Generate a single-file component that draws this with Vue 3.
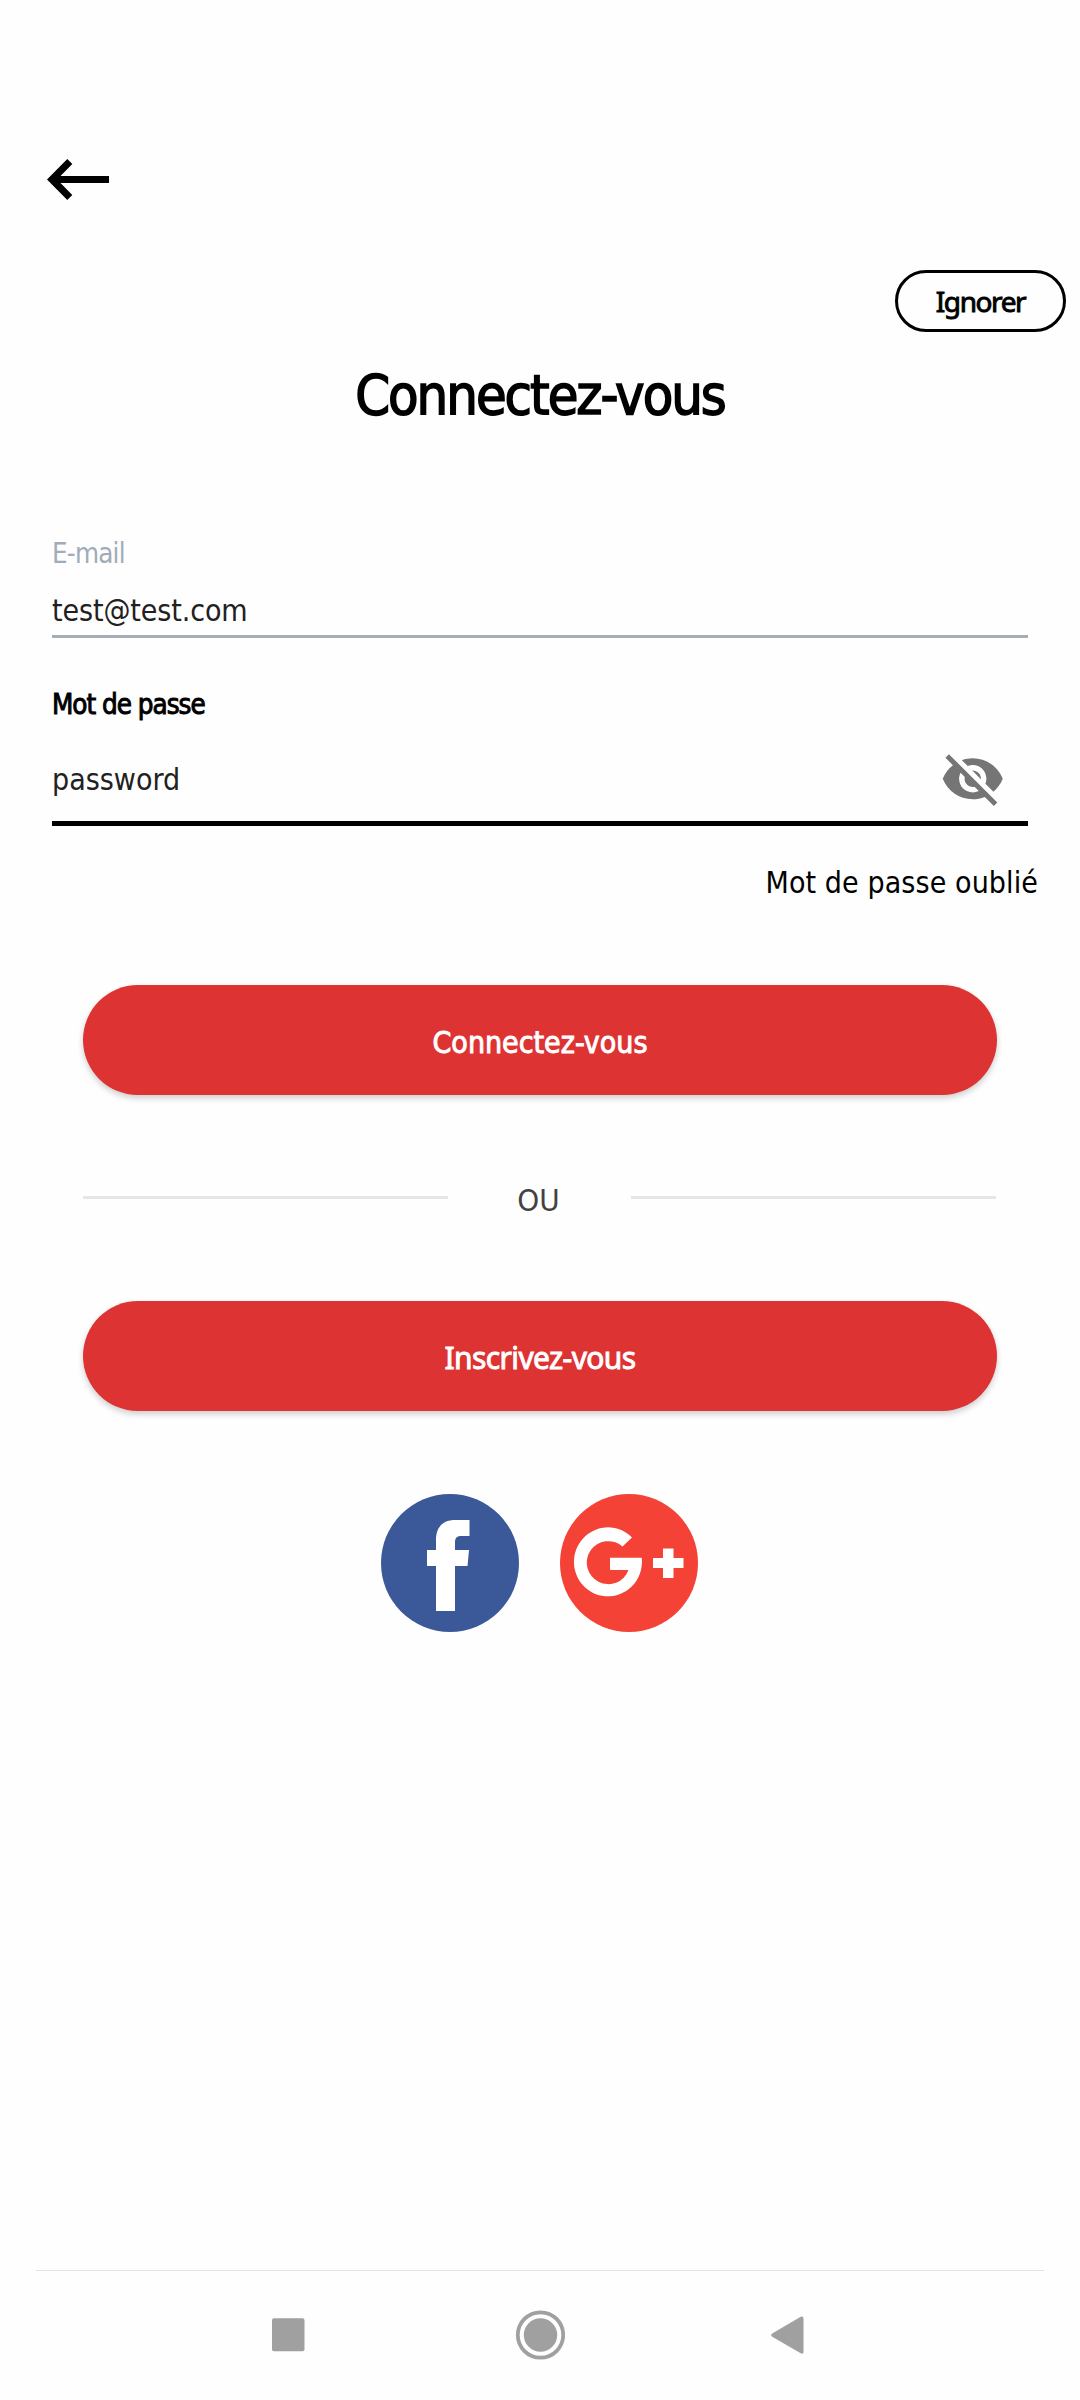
<script setup>
import { ref } from 'vue'

const email = ref('test@test.com')
const password = ref('password')
const isPasswordVisible = ref(true)

const togglePassword = () => {
  isPasswordVisible.value = !isPasswordVisible.value
}
</script>

<template>
  <div class="screen">
    <header class="header">
      <button class="icon-button" type="button" aria-label="Retour">
        <svg class="back-icon" viewBox="0 0 62 42">
          <path d="M62 17H13.500L25.300 5 20.300 0 0 20.500 20.300 41 25.300 36 13.500 24H62z" />
        </svg>
      </button>
    </header>

    <div class="skip-row">
      <button class="skip" type="button">Ignorer</button>
    </div>

    <h1 class="title">Connectez-vous</h1>

    <form class="form" @submit.prevent>
      <label class="field">
        <span class="label">E-mail</span>
        <input v-model="email" class="input" type="text" autocomplete="off" spellcheck="false" />
      </label>

      <div class="field field-active">
        <label class="label" for="password">Mot de passe</label>
        <div class="password-row">
          <input
            id="password"
            v-model="password"
            class="input"
            :type="isPasswordVisible ? 'text' : 'password'"
            autocomplete="off"
            spellcheck="false"
          />
          <button class="icon-button" type="button" aria-label="Afficher" @click="togglePassword">
            <svg class="eye-icon" viewBox="0 0 24 24">
              <path
                d="M12 7c2.76 0 5 2.24 5 5 0 .65-.13 1.26-.36 1.83l2.92 2.92c1.51-1.26 2.7-2.89 3.43-4.75-1.73-4.39-6-7.5-11-7.5-1.4 0-2.74.25-3.98.7l2.16 2.16C10.74 7.13 11.35 7 12 7zM2 4.27l2.28 2.28.46.46C3.08 8.3 1.78 10.02 1 12c1.73 4.39 6 7.5 11 7.5 1.55 0 3.03-.3 4.38-.84l.42.42L19.73 22 21 20.73 3.27 3 2 4.27zM7.53 9.8l1.55 1.55c-.05.21-.08.43-.08.65 0 1.66 1.34 3 3 3 .22 0 .44-.03.65-.08l1.55 1.55c-.67.33-1.41.53-2.2.53-2.76 0-5-2.24-5-5 0-.79.2-1.53.53-2.2zm4.31-.78l3.15 3.15.02-.16c0-1.66-1.34-3-3-3l-.17.01z"
              />
            </svg>
          </button>
        </div>
      </div>
    </form>

    <a class="forgot">Mot de passe oublié</a>

    <main class="actions">
      <button class="button" type="button">Connectez-vous</button>
      <div class="divider"><span class="divider-text">OU</span></div>
      <button class="button button-register" type="button">Inscrivez-vous</button>
    </main>

    <div class="social">
      <button class="icon-button" type="button" aria-label="Facebook">
        <svg class="social-icon" viewBox="0 0 138 138">
          <circle cx="69" cy="69" r="69" fill="#3b5998" />
          <path
            d="M55 117V72H46V56H55V46C55 33 62 26 74 26H88.500V42H80C76 42 74 44 74 48V56H88L86.500 72H74V117z"
            fill="#fff"
          />
        </svg>
      </button>
      <button class="icon-button" type="button" aria-label="Google+">
        <svg class="social-icon" viewBox="0 0 138 138">
          <circle cx="69" cy="69" r="69" fill="#f44336" />
          <path
            d="M72 43.500L62.500 52.500A21.500 21.500 0 1 0 68.500 76H50V63.800H81.700A34 34.500 0 1 1 72 43.500z"
            fill="#fff"
          />
          <path d="M103 54.500h10.500V64h10v10h-10v10H103V74H93V64h10z" fill="#fff" />
        </svg>
      </button>
    </div>

    <!-- Системная навигация -->
    <nav class="navbar">
      <svg class="nav-icon" viewBox="0 0 50 50">
        <rect x="9" y="8.300" width="32.500" height="33" rx="2" />
      </svg>
      <svg class="nav-icon" viewBox="0 0 50 50">
        <circle class="ring" cx="25.500" cy="25" r="22.700" />
        <circle cx="25.500" cy="25" r="16.700" />
      </svg>
      <svg class="nav-icon" viewBox="0 0 50 50">
        <path d="M5.200 23.500L33.300 7Q36.500 5.500 36.500 9V41.500Q36.500 45 33.300 43L5.200 26.700Q3 25 5.200 23.500z" />
      </svg>
    </nav>
  </div>
</template>

<style>
body {
  background: #fefefe;
}
</style>

<style scoped>
.screen {
  display: flex;
  flex-direction: column;
  width: 1080px;
  height: 2400px;
  box-sizing: border-box;
  overflow: hidden;
  background: #fefefe;
  color: #000;
  font-family: 'DejaVu Sans Condensed', 'DejaVu Sans', 'Noto Sans', sans-serif;
  font-size: 30px;
}

button,
input {
  margin: 0;
  padding: 0;
  border: none;
  outline: none;
  background: none;
  color: inherit;
  font: inherit;
}

svg {
  display: block;
}

.icon-button {
  cursor: pointer;
}

.header {
  display: flex;
  height: 111px;
  padding: 159px 47px 0;
}

.header .icon-button {
  height: 42px;
}

.back-icon {
  width: 62px;
  height: 42px;
}

.skip-row {
  display: flex;
  justify-content: flex-end;
  padding-right: 14px;
}

.skip {
  width: 171px;
  height: 62px;
  border: 3px solid #000;
  border-radius: 31px;
  font-family: 'Noto Sans', sans-serif;
  font-size: 28px;
  line-height: 36px;
  letter-spacing: -1.4px;
  -webkit-text-stroke: 0.9px #000;
}

.title {
  margin: 25px 0 0;
  font-size: 55.5px;
  font-weight: 400;
  line-height: 75px;
  letter-spacing: -2px;
  text-align: center;
  -webkit-text-stroke: 1.5px #000;
}

.form {
  padding: 0 52px;
}

.field {
  display: block;
  margin-top: 103px;
  padding-bottom: 2px;
  border-bottom: 3px solid #a3aeb9;
}

.label {
  display: block;
  color: #a0acb8;
  font-size: 27.5px;
  line-height: 36px;
  letter-spacing: -0.8px;
}

.input {
  display: block;
  width: 100%;
  height: 44px;
  margin-top: 18px;
  color: #212121;
  line-height: 44px;
  letter-spacing: -0.1px;
}

.field-active {
  margin-top: 48px;
  padding-bottom: 9px;
  border-bottom: 5px solid #000;
}

.field-active .label {
  color: #000;
  letter-spacing: -1px;
  -webkit-text-stroke: 0.9px #000;
}

.password-row {
  display: flex;
  align-items: center;
  height: 66px;
  margin-top: 24px;
  padding-right: 23px;
}

.password-row .input {
  flex: 1;
  width: auto;
  margin-top: 2px;
  letter-spacing: 0;
}

.eye-icon {
  width: 65.5px;
  height: 65.5px;
  fill: #757575;
}

.forgot {
  margin-top: 37px;
  padding-right: 42px;
  line-height: 40px;
  letter-spacing: 0.1px;
  text-align: right;
}

.actions {
  padding: 82px 83px 0;
}

.button {
  display: block;
  width: 100%;
  height: 110px;
  padding-top: 4px;
  border-radius: 55px;
  background: #de3333;
  box-shadow: 0 3px 6px rgba(0, 0, 0, 0.2);
  color: #fff;
  -webkit-text-stroke: 0.9px #fff;
}

.button-register {
  padding-top: 2px;
  font-family: 'Noto Sans', sans-serif;
  letter-spacing: -0.6px;
}

.divider {
  display: flex;
  align-items: center;
  gap: 68px;
  height: 39px;
  margin: 83px 0 84px;
  padding-right: 1px;
  color: #424242;
}

.divider::before,
.divider::after {
  content: '';
  flex: 1;
  height: 3px;
  background: #e6e6e6;
}

.divider-text {
  width: 47px;
  padding: 4px 2px 0 0;
  box-sizing: border-box;
  font-size: 31px;
  line-height: 40px;
  text-align: center;
}

.social {
  display: flex;
  justify-content: center;
  gap: 41px;
  margin-top: 83px;
  padding-right: 1px;
}

.social-icon {
  width: 138px;
  height: 138px;
}

.navbar {
  display: flex;
  gap: 202px;
  height: 130px;
  box-sizing: border-box;
  margin: auto 36px 0;
  padding: 39px 0 0 227px;
  border-top: 1px solid #e3e3e3;
}

.nav-icon {
  width: 50px;
  height: 50px;
  fill: #a0a0a0;
}

.ring {
  fill: none;
  stroke: #a0a0a0;
  stroke-width: 3.8;
}
</style>
